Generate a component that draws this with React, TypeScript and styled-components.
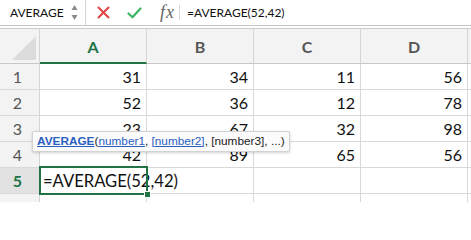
import styled, { createGlobalStyle } from 'styled-components'

const GlobalStyle = createGlobalStyle`
  html, body {
    margin: 0;
    padding: 0;
    background: #ffffff;
    overflow: hidden;
  }
  body {
    font-family: Lato, 'Liberation Sans', sans-serif;
    color: #111;
  }
`

const green = '#217346'

const columns = ['A', 'B', 'C', 'D']
const values = [
  [31, 34, 11, 56],
  [52, 36, 12, 78],
  [23, 67, 32, 98],
  [42, 89, 65, 56],
]

const Page = styled.div`
  position: relative;
  width: 471px;
  height: 202px;
  overflow: hidden;
`

const FormulaBar = styled.div`
  display: flex;
  align-items: center;
  height: 25px;
  border-bottom: 1px solid #c6c6c6;
  font-size: 12px;
`

const NameBox = styled.div`
  display: flex;
  align-items: center;
  justify-content: space-between;
  box-sizing: border-box;
  width: 86px;
  height: 100%;
  padding: 0 7px 0 10px;
  border-right: 1px solid #d4d4d4;
`

const Slot = styled.div<{ $gap: number }>`
  display: flex;
  align-items: center;
  margin-left: ${(p) => p.$gap}px;
`

const Fx = styled.span`
  font-family: 'Liberation Serif', serif;
  font-style: italic;
  font-size: 18px;
  color: #666;
  letter-spacing: 1px;
`

const Divider = styled.div`
  width: 1px;
  height: 15px;
  background: #d8d8d8;
  margin-left: 4px;
`

const FormulaText = styled.div`
  margin-left: 7px;
`

const Sheet = styled.div`
  display: grid;
  grid-template-columns: 40px repeat(4, 107px) 1fr;
  grid-template-rows: 35px repeat(6, 26px);
  margin-top: 2px;
  border-top: 1px solid #cbcbcb;
`

const Corner = styled.div`
  background: #f3f3f3;
  border-right: 1px solid #d4d4d4;
  border-bottom: 1px solid #c8c8c8;
  box-sizing: border-box;
  display: flex;
  align-items: flex-end;
  justify-content: flex-end;
  padding: 0 3px 3px 0;
`

const ColumnHeader = styled.div<{ $active?: boolean }>`
  box-sizing: border-box;
  display: flex;
  align-items: center;
  justify-content: center;
  background: #f3f3f3;
  border-right: 1px solid #d4d4d4;
  border-bottom: ${(p) => (p.$active ? `2px solid ${green}` : '1px solid #c8c8c8')};
  color: ${(p) => (p.$active ? green : '#555')};
  font-weight: 700;
  font-size: 16px;
  padding-top: ${(p) => (p.$active ? 1 : 0)}px;
`

const RowHeader = styled.div<{ $active?: boolean }>`
  box-sizing: border-box;
  display: flex;
  align-items: center;
  justify-content: center;
  padding-right: 4px;
  background: ${(p) => (p.$active ? '#e2e2e2' : '#f3f3f3')};
  border-right: 1px solid #d4d4d4;
  border-bottom: 1px solid #d9d9d9;
  color: ${(p) => (p.$active ? green : '#555')};
  font-weight: ${(p) => (p.$active ? 700 : 400)};
  font-size: 16px;
`

const Cell = styled.div`
  box-sizing: border-box;
  display: flex;
  align-items: center;
  justify-content: flex-end;
  padding-right: 5px;
  border-right: 1px solid #d9d9d9;
  border-bottom: 1px solid #d9d9d9;
  font-size: 16px;
`

const ActiveCell = styled(Cell)`
  position: relative;
  z-index: 1;
  justify-content: flex-start;
  padding: 0 0 0 3px;
  font-size: 16.6px;
  white-space: nowrap;

  &::after {
    content: '';
    position: absolute;
    left: -1px;
    top: -2px;
    right: -2px;
    bottom: -2px;
    border: 2px solid ${green};
    pointer-events: none;
  }

  &::before {
    content: '';
    position: absolute;
    right: -5px;
    bottom: -5px;
    width: 5px;
    height: 5px;
    background: ${green};
    border: 1px solid #fff;
    z-index: 2;
  }
`

const Caret = styled.span`
  display: inline-block;
  width: 1px;
  height: 22px;
  background: #000;
  vertical-align: middle;
`

const Tooltip = styled.div`
  position: absolute;
  left: 32px;
  top: 131px;
  z-index: 5;
  height: 19px;
  line-height: 19px;
  padding: 0 4px;
  background: #fbfbfb;
  border: 1px solid #d2d2d2;
  border-radius: 2px;
  box-shadow: 0 1px 3px rgba(0, 0, 0, 0.18);
  font-family: 'Liberation Sans', sans-serif;
  font-size: 11.8px;
  color: #222;
  white-space: nowrap;
`

const ArgLink = styled.span<{ $bold?: boolean }>`
  color: #2a5fc1;
  text-decoration: underline;
  font-weight: ${(p) => (p.$bold ? 700 : 400)};
`

const Spinner = () => (
  <svg width="7" height="17" viewBox="0 0 7 17">
    <path d="M3.5 1 L6.5 6 L0.5 6 Z" fill="#8a8a8a" />
    <path d="M3.5 16 L6.5 11 L0.5 11 Z" fill="#8a8a8a" />
  </svg>
)

const CancelIcon = () => (
  <svg width="13" height="13" viewBox="0 0 13 13">
    <path d="M1.5 1.5 L11.5 11.5 M11.5 1.5 L1.5 11.5" stroke="#e2423f" strokeWidth="2" strokeLinecap="round" />
  </svg>
)

const ConfirmIcon = () => (
  <svg width="15" height="12" viewBox="0 0 15 12">
    <path d="M1.5 6.5 L5.5 10.2 L13.5 1.5" stroke="#3db464" strokeWidth="2.2" fill="none" strokeLinecap="round" strokeLinejoin="round" />
  </svg>
)

const CornerTriangle = () => (
  <svg width="24" height="24" viewBox="0 0 24 24">
    <path d="M24 0 L24 24 L0 24 Z" fill="#dcdcdc" />
  </svg>
)

export default function App() {
  return (
    <Page>
      <GlobalStyle />
      <FormulaBar>
        <NameBox>
          <span>AVERAGE</span>
          <Spinner />
        </NameBox>
        <Slot $gap={11}>
          <CancelIcon />
        </Slot>
        <Slot $gap={17}>
          <ConfirmIcon />
        </Slot>
        <Slot $gap={18}>
          <Fx>fx</Fx>
        </Slot>
        <Divider />
        <FormulaText>=AVERAGE(52,42)</FormulaText>
      </FormulaBar>

      <Sheet>
        <Corner>
          <CornerTriangle />
        </Corner>
        {columns.map((c) => (
          <ColumnHeader key={c} $active={c === 'A'}>
            {c}
          </ColumnHeader>
        ))}
        <ColumnHeader />

        {values.map((row, r) => (
          <>
            <RowHeader key={`h${r}`}>{r + 1}</RowHeader>
            {row.map((v, c) => (
              <Cell key={`${r}-${c}`}>{v}</Cell>
            ))}
            <Cell key={`f${r}`} />
          </>
        ))}

        <RowHeader $active>5</RowHeader>
        <ActiveCell>
          =AVERAG<Caret />E(52,42)
        </ActiveCell>
        <Cell />
        <Cell />
        <Cell />
        <Cell />

        <RowHeader>6</RowHeader>
        <Cell />
        <Cell />
        <Cell />
        <Cell />
        <Cell />
      </Sheet>

      <Tooltip>
        <ArgLink $bold>AVERAGE</ArgLink>(<ArgLink>number1</ArgLink>, <ArgLink>[number2]</ArgLink>, [number3], ...)
      </Tooltip>
    </Page>
  )
}
